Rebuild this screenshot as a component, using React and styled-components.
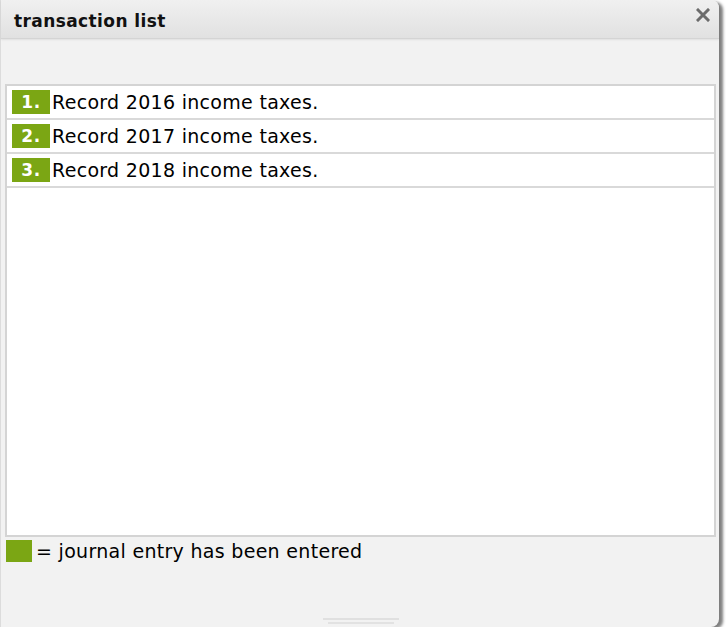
import styled, { createGlobalStyle } from "styled-components";

const GlobalStyle = createGlobalStyle`
    html, body {
        margin: 0;
        padding: 0;
        background: #ffffff;
    }
    body {
        font-family: Verdana, "DejaVu Sans", sans-serif;
    }
`

const Window = styled.div`
    position: relative;
    display: flex;
    flex-direction: column;
    width: 719px;
    height: 627px;
    box-sizing: border-box;
    background-color: #f2f2f2;
    border-left: 1px solid #dcdcdc;
    border-radius: 0 8px 8px 0;
    box-shadow: 4px 2px 3px rgba(0, 0, 0, 0.5);
`

const TitleBar = styled.div`
    display: flex;
    align-items: center;
    justify-content: space-between;
    height: 38px;
    padding: 0 8px 0 13px;
    background: linear-gradient(#f0f0f0, #e1e1e1);
    border-bottom: 1px solid #d4d4d4;
    border-radius: 0 8px 0 0;
    box-shadow: 0 1px 2px rgba(0, 0, 0, 0.08);
`

const Title = styled.h1`
    margin: 3px 0 0;
    font-size: 17px;
    letter-spacing: 0.4px;
    font-weight: bold;
    color: #111;
`

const CloseButton = styled.button`
    display: flex;
    align-items: center;
    justify-content: center;
    width: 16px;
    height: 16px;
    padding: 0;
    margin-bottom: 8px;
    border: none;
    background: none;
    cursor: pointer;
`

const Toolbar = styled.div`
    height: 45px;
`

const List = styled.ul`
    list-style: none;
    margin: 0 3px 0 4px;
    padding: 0;
    height: 453px;
    box-sizing: border-box;
    background-color: #fff;
    border: 2px solid #d4d4d4;
`

const Row = styled.li`
    display: flex;
    align-items: center;
    gap: 2px;
    height: 34px;
    box-sizing: border-box;
    padding-left: 5px;
    border-bottom: 2px solid #d9d9d9;
    font-size: 19px;
    letter-spacing: 0.3px;
    color: #000;
`

const Badge = styled.span`
    display: flex;
    align-items: center;
    justify-content: center;
    width: 38px;
    height: 24px;
    background-color: ${(props) => (props.$entered ? "#7ba614" : "#ffffff")};
    color: #fff;
    font-weight: bold;
    font-size: 17px;
    letter-spacing: 0.5px;
`

const Legend = styled.div`
    display: flex;
    align-items: center;
    gap: 4px;
    margin: 3px 0 0 5px;
    font-size: 19px;
    letter-spacing: 0.3px;
    color: #000;
`

const Swatch = styled.span`
    width: 26px;
    height: 22px;
    background-color: #7ba614;
`

const Grip = styled.div`
    position: absolute;
    left: 322px;
    bottom: 2px;
    width: 76px;
    height: 5px;
    border-top: 2px solid #e0e0e0;
    &::after {
        content: "";
        position: absolute;
        left: 5px;
        right: 5px;
        top: 2px;
        height: 2px;
        background: #e2e2e2;
    }
`

const transactions = [
    { id: 1, label: "Record 2016 income taxes." },
    { id: 2, label: "Record 2017 income taxes." },
    { id: 3, label: "Record 2018 income taxes." },
];

const App = () => {
    return (
        <>
            <GlobalStyle />
            <Window>
                <TitleBar>
                    <Title>transaction list</Title>
                    <CloseButton aria-label="close">
                        <svg width="14" height="14" viewBox="0 0 14 14">
                            <path d="M2 2 L12 12 M12 2 L2 12" stroke="#6b6b6b" strokeWidth="3" strokeLinecap="square" />
                        </svg>
                    </CloseButton>
                </TitleBar>
                <Toolbar />
                <List>
                    {transactions.map((t) => (
                        <Row key={t.id}>
                            <Badge $entered>{t.id}.</Badge>
                            {t.label}
                        </Row>
                    ))}
                </List>
                <Legend>
                    <Swatch />
                    = journal entry has been entered
                </Legend>
                <Grip />
            </Window>
        </>
    );
};

export default App;
